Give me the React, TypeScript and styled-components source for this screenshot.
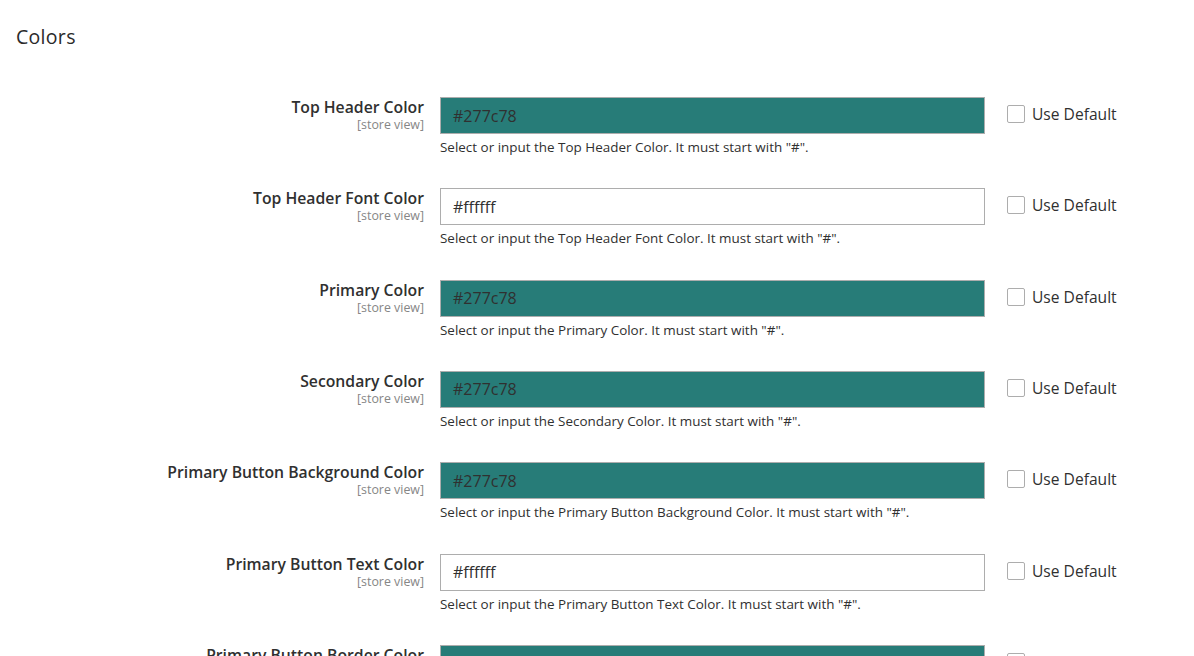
import React from "react";
import styled, { createGlobalStyle } from "styled-components";

const GlobalStyle = createGlobalStyle`
  html, body {
    margin: 0;
    padding: 0;
    background: #ffffff;
    font-family: "Open Sans", "Noto Sans", Arial, sans-serif;
    color: #303030;
  }
`;

const Page = styled.div`
  padding: 24px 0 0 0;
`;

const Title = styled.h2`
  margin: 0 0 0 16px;
  font-size: 19.5px;
  font-weight: 500;
  line-height: 26px;
  color: #2a2a2a;
  letter-spacing: 0.3px;
`;

const Fields = styled.div`
  margin-top: 47px;
  display: flex;
  flex-direction: column;
`;

const Row = styled.div`
  display: grid;
  grid-template-columns: 424px 545px auto;
  column-gap: 16px;
  height: 91.33px;
`;

const LabelCol = styled.div`
  text-align: right;
`;

const Label = styled.div`
  font-size: 15.75px;
  font-weight: 600;
  line-height: 20px;
  color: #303030;
`;

const Scope = styled.div`
  font-size: 12.4px;
  line-height: 15px;
  color: #868686;
`;

const ValueCol = styled.div`
  display: flex;
  flex-direction: column;
`;

const ColorInput = styled.div<{ swatch: string }>`
  box-sizing: border-box;
  height: 37px;
  border: 1px solid #adadad;
  background: ${(p) => p.swatch};
  padding: 0 12px;
  display: flex;
  align-items: center;
  font-size: 16px;
  color: #303030;
`;

const Note = styled.div`
  margin-top: 4px;
  font-size: 13.45px;
  line-height: 18px;
  color: #303030;
`;

const DefaultCol = styled.label`
  height: 34px;
  display: flex;
  align-items: center;
  gap: 7px;
  padding-left: 6px;
  font-size: 15.6px;
  color: #303030;
`;

const Check = styled.span`
  box-sizing: border-box;
  width: 18px;
  height: 18px;
  border: 1px solid #adadad;
  border-radius: 2px;
  background: #ffffff;
`;

const fields = [
  { label: "Top Header Color", value: "#277c78" },
  { label: "Top Header Font Color", value: "#ffffff" },
  { label: "Primary Color", value: "#277c78" },
  { label: "Secondary Color", value: "#277c78" },
  { label: "Primary Button Background Color", value: "#277c78" },
  { label: "Primary Button Text Color", value: "#ffffff" },
  { label: "Primary Button Border Color", value: "#277c78" },
];

export default function App() {
  return (
    <Page>
      <GlobalStyle />
      <Title>Colors</Title>
      <Fields>
        {fields.map((f) => (
          <Row key={f.label}>
            <LabelCol>
              <Label>{f.label}</Label>
              <Scope>[store view]</Scope>
            </LabelCol>
            <ValueCol>
              <ColorInput swatch={f.value}>{f.value}</ColorInput>
              <Note>Select or input the {f.label}. It must start with "#".</Note>
            </ValueCol>
            <DefaultCol>
              <Check />
              Use Default
            </DefaultCol>
          </Row>
        ))}
      </Fields>
    </Page>
  );
}
